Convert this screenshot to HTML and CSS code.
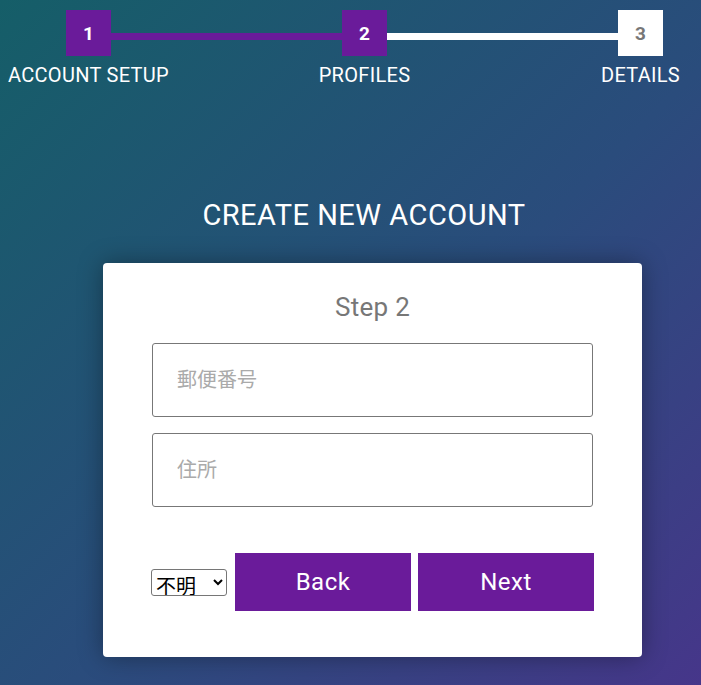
FILE: index.html
```html
<!DOCTYPE html>
<html lang="ja">
<head>
<meta charset="utf-8">
<title>Create new account</title>
<link rel="stylesheet" href="styles.css">
</head>
<body>
<div class="steps">
  <div class="step done">
    <div class="num">1</div>
    <div class="label">ACCOUNT SETUP</div>
  </div>
  <div class="line done"></div>
  <div class="step done">
    <div class="num">2</div>
    <div class="label">PROFILES</div>
  </div>
  <div class="line"></div>
  <div class="step">
    <div class="num">3</div>
    <div class="label">DETAILS</div>
  </div>
</div>
<div class="main">
  <h1 class="title">CREATE NEW ACCOUNT</h1>
</div>
<div class="card">
  <h2 class="card-title">Step 2</h2>
  <input class="field" type="text" placeholder="郵便番号">
  <input class="field field-gap" type="text" placeholder="住所">
  <div class="actions">
    <select class="lang">
      <option>不明</option>
    </select>
    <button class="btn" type="button">Back</button>
    <button class="btn" type="button">Next</button>
  </div>
</div>
</body>
</html>
```

FILE: styles.css
```css
html, body {
  margin: 0;
  padding: 0;
}
body {
  min-height: 685px;
  background: linear-gradient(to bottom right, #155e68 0%, #2a4c7c 55%, #46368a 100%);
  font-family: Roboto, "Noto Sans CJK JP", sans-serif;
  color: #fff;
  overflow: hidden;
}
.steps {
  display: flex;
  align-items: flex-start;
  padding: 10px 38px 0 66px;
}
.step {
  width: 45px;
  display: flex;
  flex-direction: column;
  align-items: center;
}
.num {
  width: 45px;
  height: 46px;
  background: #fff;
  color: #777;
  font-weight: 700;
  font-size: 19px;
  display: flex;
  align-items: center;
  justify-content: center;
}
.step.done .num {
  background: #6a1b9a;
  color: #fff;
}
.label {
  margin-top: 7px;
  font-size: 20px;
  white-space: nowrap;
  letter-spacing: 0.3px;
}
.line {
  flex: 1;
  height: 7px;
  margin-top: 23px;
  background: #fff;
}
.line.done {
  background: #6a1b9a;
}
.main {
  padding-left: 27px;
}
.title {
  margin: 111px 0 0;
  text-align: center;
  font-weight: 400;
  font-size: 29px;
  letter-spacing: 0.5px;
}
.card {
  margin: 31px 0 0 103px;
  width: 539px;
  box-sizing: border-box;
  padding: 29px 49px 46px;
  background: #fff;
  border-radius: 4px;
  box-shadow: 0 0 24px rgba(0, 0, 0, 0.35);
  display: flex;
  flex-direction: column;
}
.card-title {
  margin: 0;
  text-align: center;
  font-weight: 400;
  font-size: 26px;
  color: #777;
  letter-spacing: 0.3px;
}
.field {
  margin-top: 21px;
  height: 74px;
  box-sizing: border-box;
  width: 100%;
  border: 1px solid #777;
  border-radius: 3px;
  padding: 0 24px;
  font-family: Roboto, "Noto Sans CJK JP", sans-serif;
  font-size: 20px;
  color: #333;
  outline: none;
}
.field::placeholder {
  color: #aaa;
}
.field-gap {
  margin-top: 16px;
}
.actions {
  margin: 46px -1px 0;
  display: flex;
  align-items: center;
  gap: 8px;
}
.lang {
  width: 76px;
  height: 27px;
  padding: 0;
  font-size: 20px;
  font-family: "Noto Sans CJK JP", sans-serif;
  color: #000;
  background: #fff;
  border: 1px solid #767676;
  border-radius: 3px;
}
.btn {
  flex: 1;
  height: 58px;
  border: none;
  background: #6a1b9a;
  color: #fff;
  font-family: Roboto, sans-serif;
  font-size: 24px;
  letter-spacing: 0.5px;
  cursor: pointer;
}
.btn + .btn {
  margin-left: -1px;
}
```
